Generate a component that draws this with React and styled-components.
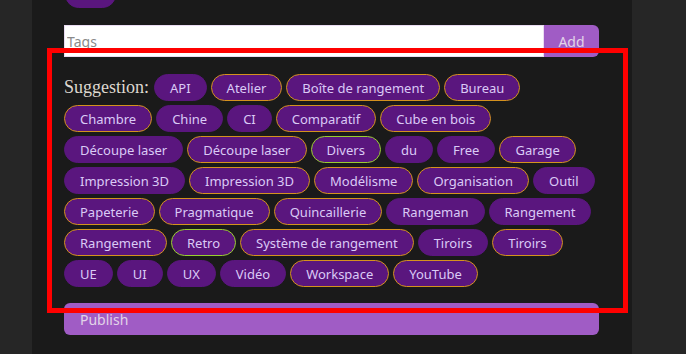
import styled, { createGlobalStyle } from "styled-components";

const GlobalStyle = createGlobalStyle`
	body {
		margin: 0;
		background-color: #262626;
		font-family: "Noto Sans", sans-serif;
	}
`;

const tags = [
	["API", "plain"], ["Atelier", "orange"], ["Boîte de rangement", "orange"], ["Bureau", "orange"],
	["Chambre", "orange"], ["Chine", "plain"], ["CI", "plain"], ["Comparatif", "orange"], ["Cube en bois", "orange"],
	["Découpe laser", "plain"], ["Découpe laser", "orange"], ["Divers", "green"], ["du", "plain"], ["Free", "plain"], ["Garage", "orange"],
	["Impression 3D", "plain"], ["Impression 3D", "orange"], ["Modélisme", "orange"], ["Organisation", "orange"], ["Outil", "plain"],
	["Papeterie", "orange"], ["Pragmatique", "orange"], ["Quincaillerie", "orange"], ["Rangeman", "plain"], ["Rangement", "plain"],
	["Rangement", "orange"], ["Retro", "green"], ["Système de rangement", "orange"], ["Tiroirs", "plain"], ["Tiroirs", "orange"],
	["UE", "plain"], ["UI", "plain"], ["UX", "plain"], ["Vidéo", "plain"], ["Workspace", "orange"], ["YouTube", "orange"],
];

const borders = {
	plain: "#5a167e",
	orange: "#d4921e",
	green: "#9acd32",
};

export default function App() {
	return (
		<>
			<GlobalStyle />
			<Page>
				<TopRow>
					<Tag kind="plain">DH</Tag>
				</TopRow>
				<InputRow>
					<TagInput placeholder="Tags" />
					<AddButton>Add</AddButton>
				</InputRow>
				<Suggestions>
					<Label>Suggestion:</Label>
					{tags.map(([name, kind], i) => (
						<Tag key={i} kind={kind}>{name}</Tag>
					))}
				</Suggestions>
				<Publish>Publish</Publish>
				<Highlight />
			</Page>
		</>
	);
}

const Page = styled.div`
	position: relative;
	box-sizing: border-box;
	width: 600px;
	height: 354px;
	margin-left: 32px;
	padding: 0 33px 0 32px;
	background-color: #1a1a1a;
	overflow: hidden;
`;

const TopRow = styled.div`
	display: flex;
	margin-top: -19px;
	padding-left: 1px;
`;

const InputRow = styled.div`
	display: flex;
	height: 32px;
	margin-top: 17px;
`;

const TagInput = styled.input`
	flex: 1;
	box-sizing: border-box;
	height: 100%;
	margin: 0;
	padding: 0 2px;
	border: 1px solid #eadcf2;
	background: #fff;
	font-family: "Noto Sans", sans-serif;
	font-size: 14px;
	outline: none;
	&::placeholder {
		color: #8a8a8a;
	}
`;

const AddButton = styled.button`
	width: 55px;
	height: 100%;
	border: none;
	border-radius: 0 6px 6px 0;
	background-color: #a05cc5;
	color: #e2d4e8;
	font-family: "Noto Sans", sans-serif;
	font-size: 14px;
	padding: 0;
`;

const Suggestions = styled.div`
	display: flex;
	flex-wrap: wrap;
	align-items: center;
	gap: 4px 4px;
	margin-top: 17px;
`;

const Label = styled.span`
	font-family: "Liberation Serif", serif;
	font-size: 18px;
	color: #ded8d0;
	margin-right: 1px;
	line-height: 27px;
	margin-top: -1px;
`;

const Tag = styled.span`
	display: flex;
	align-items: center;
	box-sizing: border-box;
	height: 27px;
	padding: 0 15px;
	border: 1px solid ${(props) => borders[props.kind]};
	border-radius: 14px;
	background-color: #5a167e;
	color: #dacaf6;
	font-size: 13px;
	white-space: nowrap;
`;

const Publish = styled.div`
	display: flex;
	align-items: center;
	height: 32px;
	margin-top: 16px;
	padding: 0 16px;
	border-radius: 6px;
	background-color: #a05cc5;
	color: #e2d4e8;
	font-size: 14px;
`;

const Highlight = styled.div`
	position: absolute;
	left: 15px;
	top: 48px;
	width: 581px;
	height: 265px;
	box-sizing: border-box;
	border: 5px solid #ff0000;
	pointer-events: none;
`;
